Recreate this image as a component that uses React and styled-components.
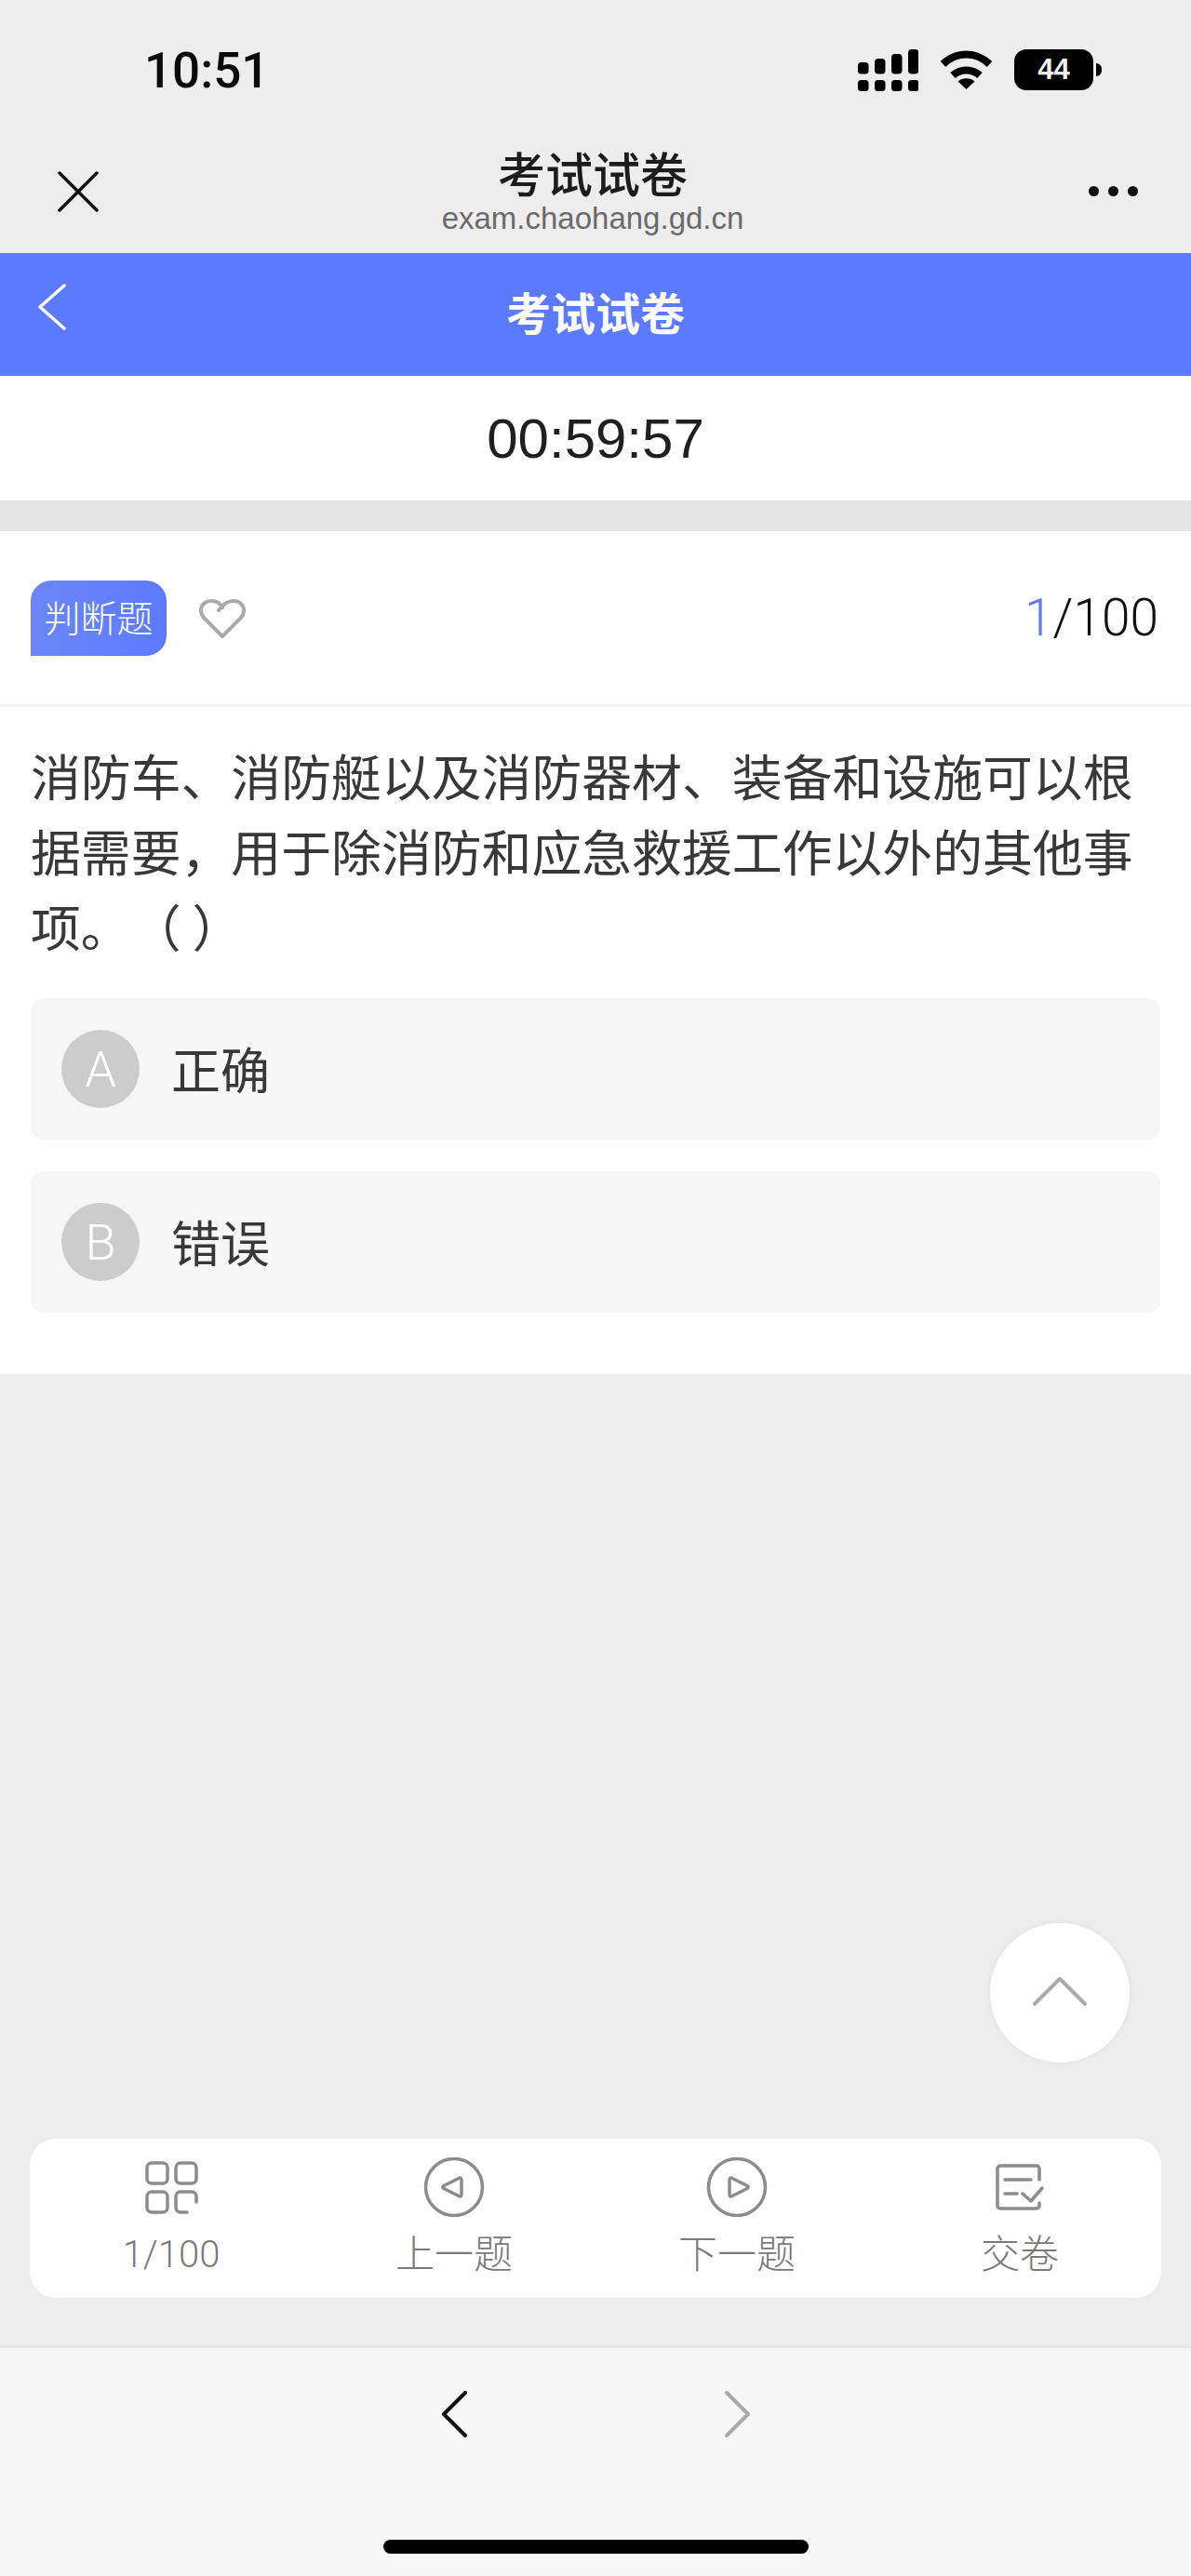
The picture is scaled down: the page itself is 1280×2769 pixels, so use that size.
import React from "react";
import styled, { createGlobalStyle } from "styled-components";

const sans = `"Liberation Sans", "Noto Sans CJK SC", sans-serif`;
const light = `Roboto, "Noto Sans CJK SC", sans-serif`;
const cjk = `"Noto Sans CJK SC", "Liberation Sans", sans-serif`;

const Global = createGlobalStyle`
  html, body { margin: 0; padding: 0; background: #ededed; }
  * { box-sizing: border-box; }
`;

const Page = styled.div`
  width: 1280px;
  height: 2769px;
  display: flex;
  flex-direction: column;
  background: #ededed;
  font-family: ${sans};
  overflow: hidden;
`;

const StatusBar = styled.div`
  height: 150px;
  padding: 0 96px 0 155px;
  display: flex;
  align-items: center;
  justify-content: space-between;
`;
const Clock = styled.div`
  font-family: Roboto, sans-serif;
  font-size: 53px;
  font-weight: 500;
  line-height: 60px;
  color: #0a0a0a;
  margin-top: 2px;
`;
const StatusIcons = styled.div`
  display: flex;
  align-items: center;
`;
const Signal = styled.svg`
  width: 65px;
  height: 45px;
  margin-right: 23px;
`;
const Wifi = styled.svg`
  width: 57px;
  height: 42px;
  margin-right: 23px;
`;
const Battery = styled.div`
  width: 85px;
  height: 44px;
  border-radius: 13px;
  background: #000;
  color: #f2f2f2;
  font-size: 31px;
  font-weight: 700;
  line-height: 44px;
  text-align: center;
`;
const BatteryCap = styled.div`
  width: 6px;
  height: 14px;
  margin-left: 3px;
  border-radius: 0 7px 7px 0;
  background: #000;
`;

const WebNav = styled.div`
  height: 122px;
  display: grid;
  grid-template-columns: 1fr auto 1fr;
  padding: 10px 68px 0 62px;
`;
const CloseSlot = styled.svg`
  width: 44px;
  height: 44px;
  margin-top: 24px;
`;
const NavCenter = styled.div`
  display: flex;
  flex-direction: column;
  align-items: center;
`;
const NavTitle = styled.div`
  font-family: ${sans};
  font-size: 51px;
  font-weight: 500;
  line-height: 60px;
  color: #1c1c1c;
`;
const NavUrl = styled.div`
  font-size: 33px;
  line-height: 36px;
  margin-top: -3px;
  color: #6a6a6a;
`;
const Dots = styled.div`
  justify-self: end;
  display: flex;
  gap: 10px;
  margin: 40px -11px 0 0;
`;
const Dot = styled.span`
  width: 11px;
  height: 11px;
  border-radius: 50%;
  background: #111;
`;

const BlueHeader = styled.div`
  position: relative;
  height: 132px;
  padding-bottom: 8px;
  background: #5c7aff;
  display: flex;
  align-items: center;
  justify-content: center;
`;
const BackIcon = styled.svg`
  position: absolute;
  left: 41px;
  top: 33px;
  width: 30px;
  height: 50px;
`;
const BlueTitle = styled.div`
  font-family: ${cjk};
  font-size: 48px;
  font-weight: 700;
  color: #fff;
  line-height: 60px;
`;

const Timer = styled.div`
  height: 134px;
  background: #fff;
  display: flex;
  align-items: center;
  justify-content: center;
  font-size: 60px;
  color: #1f1f1f;
`;
const Band = styled.div`
  height: 33px;
  background: #e6e6e6;
`;

const Card = styled.section`
  background: #fff;
  padding-bottom: 66px;
`;
const CardHead = styled.div`
  height: 189px;
  border-bottom: 3px solid #f2f2f2;
  padding: 0 35px 0 33px;
  display: flex;
  align-items: center;
`;
const Badge = styled.div`
  width: 146px;
  height: 81px;
  padding-bottom: 5px;
  border-radius: 22px 22px 22px 0;
  background: linear-gradient(90deg, #6c86f6, #5c7aff);
  color: #fff;
  font-family: ${cjk};
  font-size: 39px;
  font-weight: 300;
  display: flex;
  align-items: center;
  justify-content: center;
`;
const Heart = styled.svg`
  width: 52px;
  height: 42px;
  margin: 2px 0 0 34px;
`;
const Counter = styled.div`
  margin-left: auto;
  font-family: ${light};
  font-weight: 300;
  font-size: 55px;
  color: #111;
`;
const CounterNow = styled.span`
  color: #5c7aff;
`;
const Question = styled.p`
  margin: 0;
  padding: 33px 33px 2px;
  font-family: ${cjk};
  font-size: 53.85px;
  line-height: 81px;
  color: #383838;
  text-spacing-trim: space-all;
`;
const Options = styled.div`
  margin-top: 35px;
  padding: 0 33px;
  display: flex;
  flex-direction: column;
  gap: 34px;
`;
const Option = styled.div`
  height: 152px;
  border-radius: 14px;
  background: #f6f6f6;
  padding-left: 33px;
  display: flex;
  align-items: center;
  gap: 34px;
`;
const OptionLetter = styled.div`
  width: 84px;
  height: 84px;
  border-radius: 50%;
  background: #cccccc;
  color: #fff;
  font-family: ${light};
  font-weight: 300;
  font-size: 54px;
  display: flex;
  align-items: center;
  justify-content: center;
`;
const OptionText = styled.div`
  font-family: ${cjk};
  font-size: 53px;
  line-height: 70px;
  margin-top: -3px;
  color: #383838;
`;

const Main = styled.div`
  position: relative;
  flex: 1;
  display: flex;
  flex-direction: column;
  justify-content: flex-end;
  padding: 0 32px 51px;
`;
const ScrollTop = styled.div`
  position: absolute;
  right: 66px;
  bottom: 304px;
  width: 150px;
  height: 150px;
  border-radius: 50%;
  background: #fff;
  box-shadow: 0 0 6px rgba(0, 0, 0, 0.06);
  display: flex;
  align-items: center;
  justify-content: center;
`;
const ScrollIcon = styled.svg`
  width: 58px;
  height: 32px;
  margin-bottom: 4px;
`;
const Toolbar = styled.nav`
  height: 171px;
  border-radius: 28px;
  background: #fff;
  padding-top: 20px;
  display: grid;
  grid-template-columns: repeat(4, 1fr);
`;
const ToolItem = styled.div`
  display: flex;
  flex-direction: column;
  align-items: center;
`;
const ToolIconBox = styled.div`
  height: 64px;
  display: flex;
  align-items: center;
  justify-content: center;
  color: #8c8c8c;
`;
const ToolLabel = styled.div`
  margin-top: 19px;
  font-family: ${light};
  font-weight: 300;
  font-size: ${(p) => (p.$num ? 40 : 42)}px;
  line-height: 44px;
  color: #7a7a7a;
`;

const BottomBar = styled.div`
  height: 248px;
  border-top: 3px solid #e8e8e8;
  background: #f7f7f7;
  display: flex;
  flex-direction: column;
  align-items: center;
  padding-top: 46px;
`;
const BrowserNav = styled.div`
  display: flex;
  gap: 277px;
`;
const BrowserArrow = styled.svg`
  width: 27px;
  height: 50px;
`;
const HomeBar = styled.div`
  margin-top: 110px;
  width: 457px;
  height: 15px;
  border-radius: 8px;
  background: #000;
`;

const Stroke = { fill: "none", stroke: "currentColor", strokeWidth: 3.5, strokeLinecap: "round", strokeLinejoin: "round" };

const GridIcon = () => (
  <svg width="57" height="57" viewBox="0 0 57 57" {...Stroke}>
    <rect x="2" y="2" width="22" height="22" rx="5" />
    <rect x="33" y="2" width="22" height="22" rx="5" />
    <rect x="2" y="33" width="22" height="22" rx="5" />
    <path d="M55 44V38a5 5 0 0 0-5-5H38a5 5 0 0 0-5 5V50a5 5 0 0 0 5 5H45" />
  </svg>
);
const PrevIcon = () => (
  <svg width="66" height="64" viewBox="0 0 66 64" {...Stroke}>
    <circle cx="33" cy="32" r="30.5" />
    <path d="M38 22.5Q41 21 41 24.5V39.5Q41 43 38 41.5L22 33.5Q19.5 32 22 30.5Z" />
  </svg>
);
const NextIcon = () => (
  <svg width="66" height="64" viewBox="0 0 66 64" {...Stroke}>
    <circle cx="33" cy="32" r="30.5" />
    <path d="M28 22.5Q25 21 25 24.5V39.5Q25 43 28 41.5L44 33.5Q46.5 32 44 30.5Z" />
  </svg>
);
const SubmitIcon = () => (
  <svg width="52" height="50" viewBox="0 0 52 50" {...Stroke}>
    <path d="M47 17V5a3 3 0 0 0-3-3H5a3 3 0 0 0-3 3V45a3 3 0 0 0 3 3H44a3 3 0 0 0 3-3V42" />
    <path d="M10 17H38M10 32H23M29 32L38 40L50 26" />
  </svg>
);

const tools = [
  { Icon: GridIcon, label: "1/100", num: true },
  { Icon: PrevIcon, label: "上一题" },
  { Icon: NextIcon, label: "下一题" },
  { Icon: SubmitIcon, label: "交卷" },
];

export default function App() {
  return (
    <Page>
      <Global />
      <StatusBar>
        <Clock>10:51</Clock>
        <StatusIcons>
          <Signal viewBox="0 0 65 45" fill="#000">
            <rect x="0" y="33" width="11.5" height="12" rx="3.5" />
            <rect x="18" y="33" width="11.5" height="12" rx="3.5" />
            <rect x="36" y="33" width="11.5" height="12" rx="3.5" />
            <rect x="54" y="33" width="11.5" height="12" rx="3.5" />
            <rect x="0" y="14" width="11.5" height="12.5" rx="3.5" />
            <rect x="18" y="10" width="11.5" height="16.5" rx="4" />
            <rect x="36" y="5" width="11.5" height="21.5" rx="4" />
            <rect x="54" y="0" width="11.5" height="26.5" rx="4" />
          </Signal>
          <Wifi viewBox="0 0 57 42" fill="none" stroke="#000" strokeWidth="8">
            <path d="M3.5 15C18 1 39 1 53.5 15" />
            <path d="M14 27C22 19.5 35 19.5 43 27" />
            <path d="M19.5 33.5C24 29 33 29 37.5 33.5L28.5 42Z" fill="#000" stroke="none" />
          </Wifi>
          <Battery>44</Battery>
          <BatteryCap />
        </StatusIcons>
      </StatusBar>

      <WebNav>
        <CloseSlot viewBox="0 0 44 44" fill="none" stroke="#111" strokeWidth="3.5" strokeLinecap="round">
          <path d="M2 2L42 42M42 2L2 42" />
        </CloseSlot>
        <NavCenter>
          <NavTitle>考试试卷</NavTitle>
          <NavUrl>exam.chaohang.gd.cn</NavUrl>
        </NavCenter>
        <Dots>
          <Dot />
          <Dot />
          <Dot />
        </Dots>
      </WebNav>

      <BlueHeader>
        <BackIcon viewBox="0 0 30 50" fill="none" stroke="#fff" strokeWidth="3.5" strokeLinecap="round" strokeLinejoin="round">
          <path d="M28 2L2 25L28 48" />
        </BackIcon>
        <BlueTitle>考试试卷</BlueTitle>
      </BlueHeader>

      <Timer>00:59:57</Timer>
      <Band />

      <Card>
        <CardHead>
          <Badge>判断题</Badge>
          <Heart viewBox="0 0 52 42" fill="none" stroke="#aaaaaa" strokeWidth="4" strokeLinecap="round" strokeLinejoin="round">
            <path d="M26 40L6 20C-1 11 5 2 14 2C20 2 24 5 26 9" />
            <path d="M26 40L46 20C53 11 47 2 38 2C32 2 27 5 22 12" />
          </Heart>
          <Counter>
            <CounterNow>1</CounterNow>/100
          </Counter>
        </CardHead>
        <Question>
          消防车、消防艇以及消防器材、装备和设施可以根据需要，用于除消防和应急救援工作以外的其他事项。（ ）
        </Question>
        <Options>
          <Option>
            <OptionLetter>A</OptionLetter>
            <OptionText>正确</OptionText>
          </Option>
          <Option>
            <OptionLetter>B</OptionLetter>
            <OptionText>错误</OptionText>
          </Option>
        </Options>
      </Card>

      <Main>
        <ScrollTop>
          <ScrollIcon viewBox="0 0 58 32" fill="none" stroke="#aaaaaa" strokeWidth="4" strokeLinecap="round" strokeLinejoin="round">
            <path d="M2 30L29 3L56 30" />
          </ScrollIcon>
        </ScrollTop>
        <Toolbar>
          {tools.map(({ Icon, label, num }) => (
            <ToolItem key={label}>
              <ToolIconBox>
                <Icon />
              </ToolIconBox>
              <ToolLabel $num={num}>{label}</ToolLabel>
            </ToolItem>
          ))}
        </Toolbar>
      </Main>

      <BottomBar>
        <BrowserNav>
          <BrowserArrow viewBox="0 0 27 50" fill="none" stroke="#111" strokeWidth="4" strokeLinecap="round" strokeLinejoin="round">
            <path d="M25 2L2 25L25 48" />
          </BrowserArrow>
          <BrowserArrow viewBox="0 0 27 50" fill="none" stroke="#aaaaaa" strokeWidth="4" strokeLinecap="round" strokeLinejoin="round">
            <path d="M2 2L25 25L2 48" />
          </BrowserArrow>
        </BrowserNav>
        <HomeBar />
      </BottomBar>
    </Page>
  );
}
